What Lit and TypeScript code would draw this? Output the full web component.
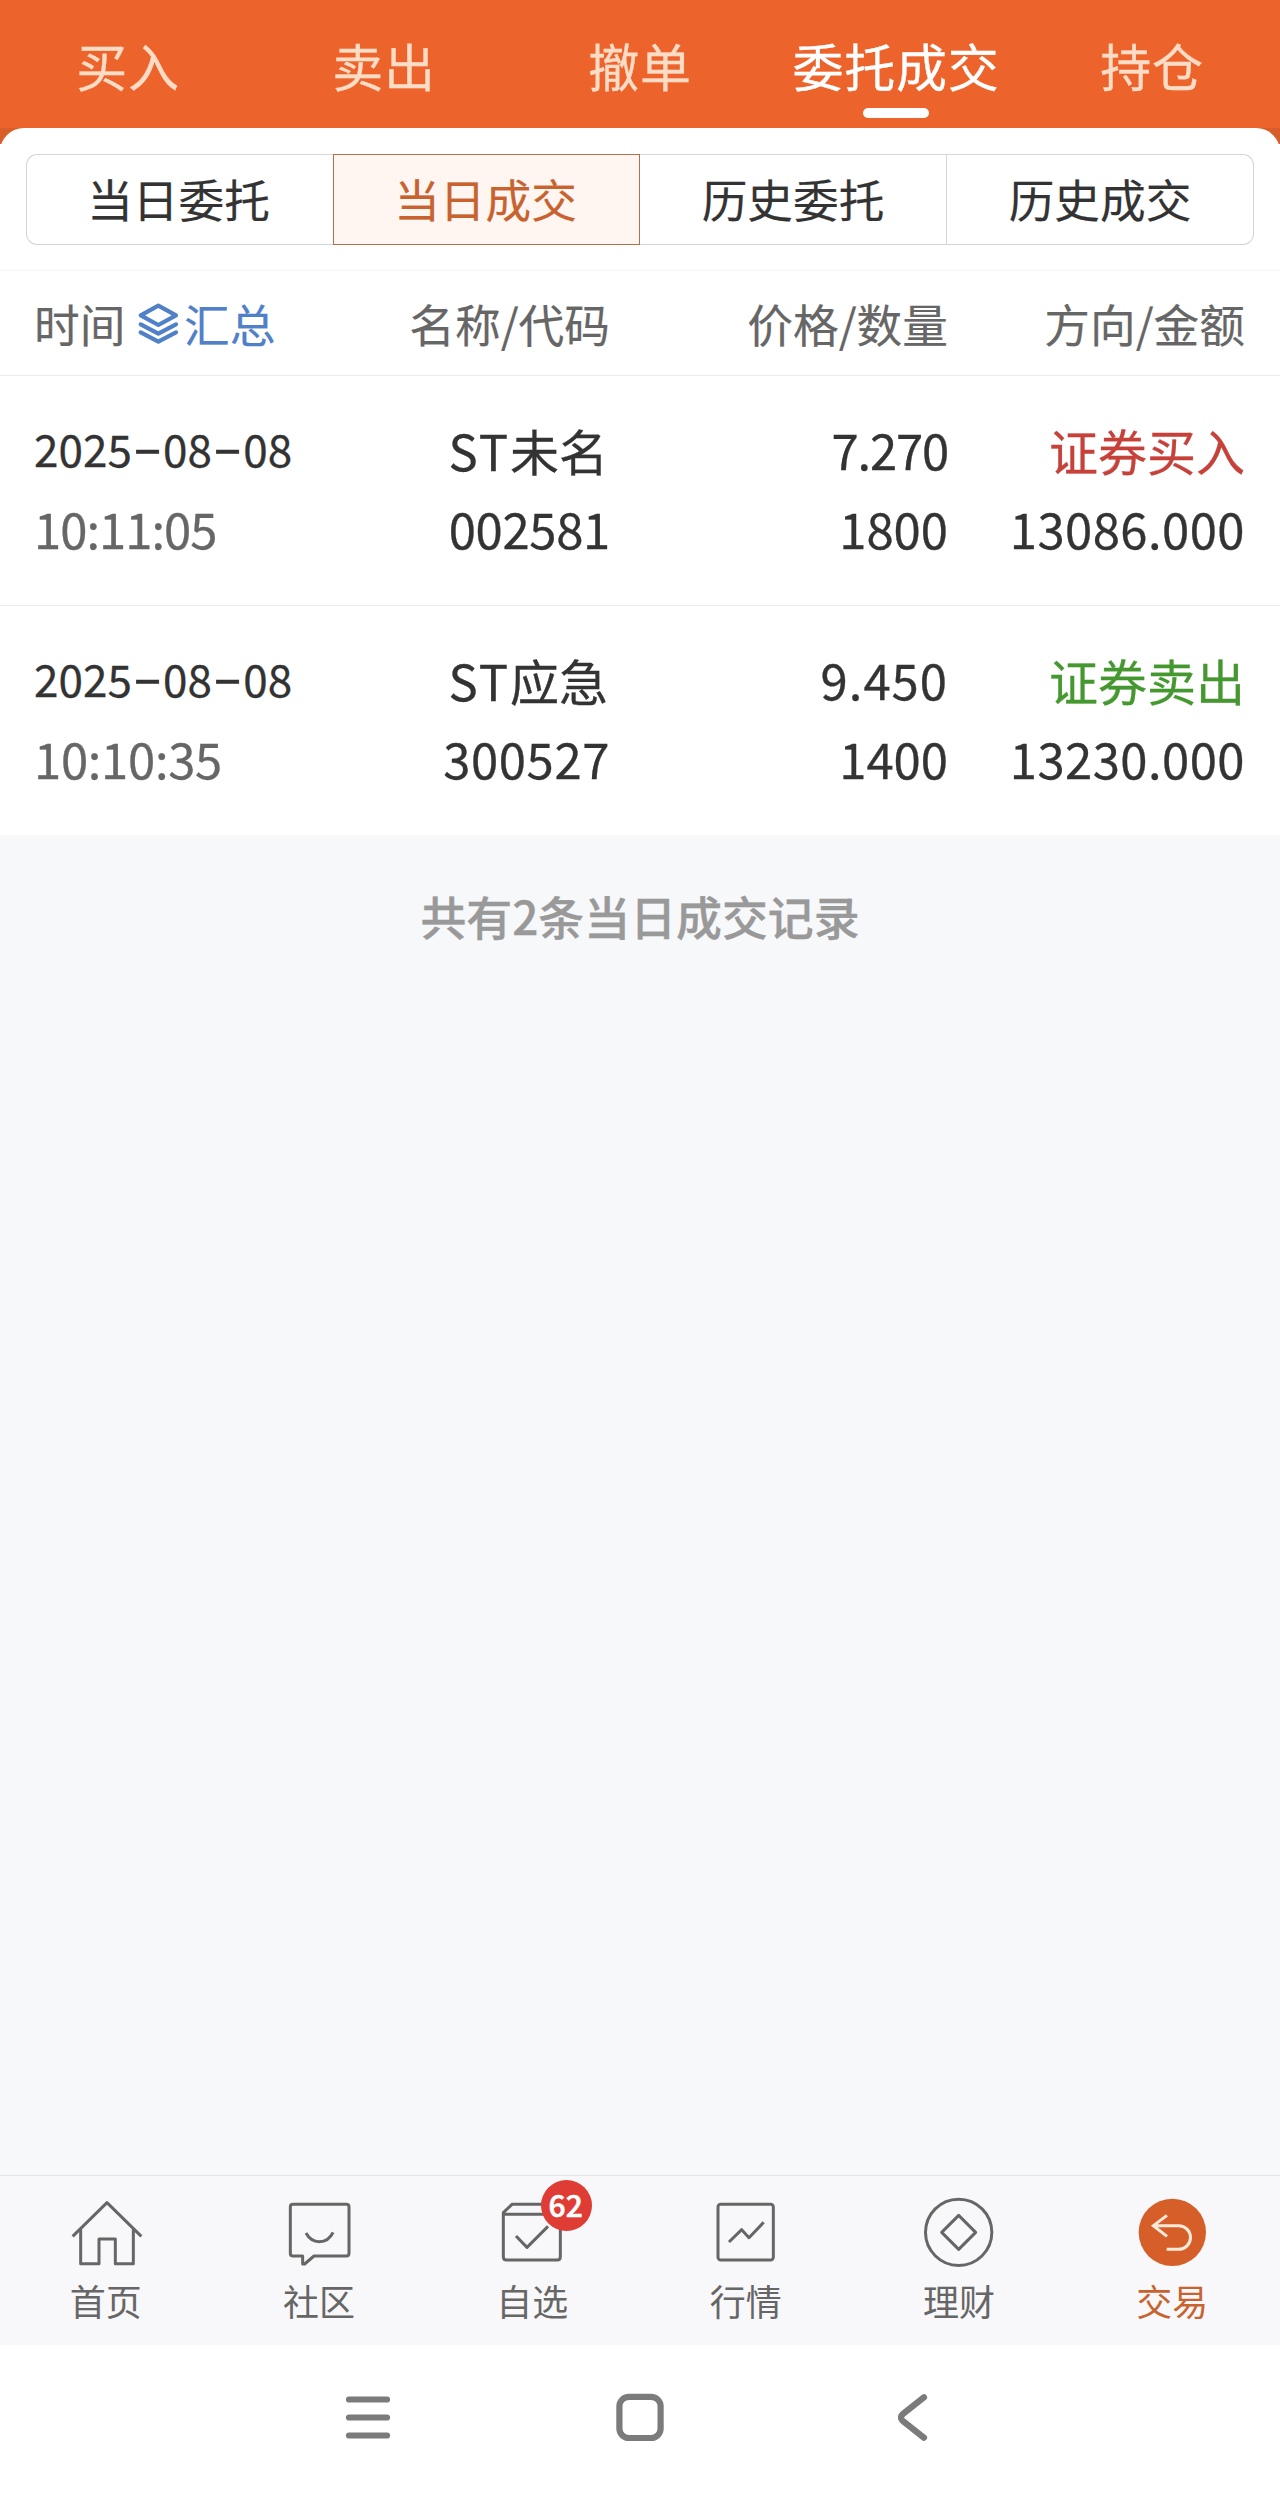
import { LitElement, html, svg, css } from "lit";
import { customElement, property } from "lit/decorators.js";
import { classMap } from "lit/directives/class-map.js";

interface Trade {
  date: string;
  time: string;
  name: string;
  code: string;
  price: string;
  qty: string;
  side: "buy" | "sell";
  label: string;
  amount: string;
}

const TABS = ["买入", "卖出", "撤单", "委托成交", "持仓"];
const SEGMENTS = ["当日委托", "当日成交", "历史委托", "历史成交"];
const TRADES: Trade[] = [
  { date: "2025-08-08", time: "10:11:05", name: "ST未名", code: "002581", price: "7.270", qty: "1800", side: "buy", label: "证券买入", amount: "13086.000" },
  { date: "2025-08-08", time: "10:10:35", name: "ST应急", code: "300527", price: "9.450", qty: "1400", side: "sell", label: "证券卖出", amount: "13230.000" },
];

const NAV = [
  {
    label: "首页", box: "194 90 252 252",
    icon: svg`<path d="M217 229 L320 128 L423 229"/><path d="M241 208 V311 H296 V237 H345 V311 H399 V208"/>`,
  },
  {
    label: "社区", box: "834 90 252 252",
    icon: svg`<path d="M879 133 H1039 Q1047 133 1047 141 V280 Q1047 288 1039 288 H942 L914 312 H908 V288 H879 Q871 288 871 280 V141 Q871 133 879 133 Z"/><path d="M918 219 Q932 245 958 245 Q986 245 999 217"/>`,
  },
  {
    label: "自选", box: "184 90 252 252", badge: "62",
    icon: svg`<path d="M221 163 H392 V290 Q392 300 382 300 H231 Q221 300 221 290 V158 L247 133 H368 L392 163"/><path d="M259 228 L292 262 L355 199"/>`,
  },
  {
    label: "行情", box: "824 90 252 252",
    icon: svg`<rect x="863" y="133" width="166" height="167" rx="8"/><path d="M896 246 L934 209 L956 233 L1000 187"/>`,
  },
  {
    label: "理财", box: "204 90 252 252",
    icon: svg`<circle cx="326" cy="217" r="99.5"/><path d="M326 166 L377 217 L326 268 L275 217 Z"/>`,
  },
  {
    label: "交易", box: "844 90 252 252", active: true,
    icon: svg`<circle class="disc" cx="968" cy="217" r="101"/><path d="M952 166 L911 197 L952 229 M914 197 H987 A35.5 35.5 0 0 1 987 268 H951"/>`,
  },
];

@customElement("trade-row")
class TradeRow extends LitElement {
  @property({ attribute: false }) trade!: Trade;

  static styles = css`
    :host { display: block; height: 230px; box-sizing: border-box; border-bottom: 1px solid #ebebec; color: #333; }
    :host([last]) { border-bottom: 0; height: 229px; }
    .row {
      display: grid;
      grid-template-columns: 300px 275px 338px 297px;
      grid-template-rows: 79px 79px;
      padding: 33px 35px 0 35px;
      line-height: 79px;
      font-size: 49px;
      text-align: right;
      white-space: nowrap;
      -webkit-text-stroke: 0.3px currentColor;
    }
    .date, .time { text-align: left; margin-left: -1px; }
    .date { font-size: 44px; letter-spacing: 0.1px; }
    .time { color: #666; letter-spacing: -1px; }
    :host([last]) .time { letter-spacing: -0.3px; }
    .dash { display: inline-block; width: 31px; text-align: center; transform: translateY(-4px) scale(2, 1.15); }
    .name { padding-right: 2px; }
    .name, .buy, .sell { position: relative; top: 1px; }
    .latin { letter-spacing: 2px; }
    .price { letter-spacing: -1.2px; }
    :host([last]) .price { letter-spacing: 1px; }
    .code { letter-spacing: -0.3px; }
    :host([last]) .code { letter-spacing: 0.6px; }
    .amount { letter-spacing: 0.45px; }
    .buy { color: #c5413a; }
    .sell { color: #45982f; }
  `;

  render() {
    const t = this.trade;
    const parts = t.date.split("-");
    return html`<div class="row">
      <div class="date">${parts.map((p, i) => (i ? html`<span class="dash">-</span>${p}` : p))}</div>
      <div class="name"><span class="latin">${t.name.slice(0, 2)}</span>${t.name.slice(2)}</div>
      <div class="price">${t.price}</div>
      <div class=${t.side}>${t.label}</div>
      <div class="time">${t.time}</div>
      <div class="code">${t.code}</div>
      <div>${t.qty}</div>
      <div class="amount">${t.amount}</div>
    </div>`;
  }
}

@customElement("app-root")
class AppRoot extends LitElement {
  static styles = css`
    :host {
      display: flex;
      flex-direction: column;
      width: 1280px;
      height: 2497px;
      overflow: hidden;
      background: #f7f8fa;
      font-family: "Noto Sans CJK SC", "Noto Sans", sans-serif;
      color: #333;
    }
    .tabs { display: grid; grid-template-columns: repeat(5, 1fr); height: 128px; background: #ec632b; flex: none; }
    .tab {
      display: flex; flex-direction: column; align-items: center;
      padding-top: 25px; box-sizing: border-box;
      font-size: 51px; line-height: 80px; letter-spacing: 0.8px; color: #ffdcc6; white-space: nowrap;
      -webkit-text-stroke: 0.3px currentColor;
    }
    .tab.on { color: #fff; }
    .tab.on::after { content: ""; width: 66px; height: 10px; margin-top: 3px; border-radius: 5px; background: #fff; }
    .under { flex: none; background: linear-gradient(#d75d29 0 16px, #fff 16px); }
    .panel { background: #fff; border-radius: 24px 24px 0 0; padding-top: 26px; }
    .segs { display: grid; grid-template-columns: repeat(4, 307px); margin: 0 26px; height: 91px; }
    .seg {
      display: flex; align-items: center; justify-content: center; box-sizing: border-box;
      border: 1px solid #d5d6d8; border-left-width: 0; font-size: 45.7px; padding-bottom: 3px;
      -webkit-text-stroke: 0.2px currentColor;
    }
    .seg:first-child { border-left-width: 1px; border-right-width: 0; border-radius: 11px 0 0 11px; padding-right: 3px; }
    .seg:last-child { border-radius: 0 11px 11px 0; }
    .seg.on { border: 1px solid #b3704a; background: #fff6f2; color: #c8632f; padding-right: 2px; }
    .head {
      display: grid; grid-template-columns: 300px 275px 338px 297px;
      margin-top: 25px; height: 106px; box-sizing: border-box; padding: 0 35px;
      border-top: 1px solid #f5f5f6; border-bottom: 1px solid #ebebec;
      font-size: 45.7px; line-height: 105px; color: #666; text-align: right; white-space: nowrap;
      -webkit-text-stroke: 0.2px currentColor;
    }
    .first { display: flex; align-items: center; text-align: left; height: 105px; margin-left: -1px; }
    .layers { width: 42.7px; height: 43.3px; margin: 1px 4px 0 12px; fill: none; stroke: #4f80c8; stroke-width: 12.5; stroke-linejoin: round; stroke-linecap: round; }
    .sum { color: #4f80c8; }
    .note { flex: 1; padding-top: 45px; text-align: center; font-size: 45.9px; line-height: 70px; font-weight: 500; color: #999; -webkit-text-stroke: 0.4px currentColor; }
    .nav {
      flex: none; display: grid; grid-template-columns: repeat(6, 1fr); height: 170px; box-sizing: border-box;
      border-top: 1px solid #e2e4e6; background: #f8f8fa;
    }
    .item { position: relative; display: flex; flex-direction: column; align-items: center; padding-top: 14px; font-size: 36px; line-height: 52px; color: #666; }
    .item svg { width: 84px; height: 84px; fill: none; stroke: #666; stroke-width: 9; stroke-linejoin: round; }
    .label { padding-right: 2px; }
    .item.on { color: #c8632f; }
    .item.on svg { stroke: #ffe9d8; stroke-linejoin: miter; }
    .item .disc { fill: #d65f29; stroke: none; }
    .badge {
      position: absolute; left: 114px; top: 4px; width: 51px; height: 51px; border-radius: 50%;
      background: #de3c34; color: #fff; font-size: 30px; line-height: 48px; text-align: center; font-weight: 500;
      -webkit-text-stroke: 0.6px currentColor; text-indent: -1px;
    }
    .system { flex: none; height: 152px; background: #fff; display: flex; justify-content: center; padding-right: 1px; }
    .system svg { width: 272px; height: 145px; fill: none; stroke: #7b7b7b; stroke-width: 6.2; stroke-linecap: round; stroke-linejoin: round; }
  `;

  render() {
    return html`
      <div class="tabs">
        ${TABS.map((t) => html`<div class=${classMap({ tab: true, on: t === "委托成交" })}>${t}</div>`)}
      </div>
      <div class="under"><div class="panel">
        <div class="segs">
          ${SEGMENTS.map((s) => html`<div class=${classMap({ seg: true, on: s === "当日成交" })}>${s}</div>`)}
        </div>
        <div class="head">
          <div class="first">
            <span>时间</span>
            <svg class="layers" viewBox="24 36 128 130">
              <path d="M88 47 L141 76 L88 105 L35 76 Z M35 103 L88 131 L141 103 M35 127 L88 155 L141 127" />
            </svg>
            <span class="sum">汇总</span>
          </div>
          <div>名称/代码</div>
          <div>价格/数量</div>
          <div>方向/金额</div>
        </div>
        ${TRADES.map((t, i) => html`<trade-row .trade=${t} ?last=${i === TRADES.length - 1}></trade-row>`)}
      </div></div>
      <div class="note">共有2条当日成交记录</div>
      <div class="nav">
        ${NAV.map((n) => html`<div class=${classMap({ item: true, on: !!n.active })}>
          <svg viewBox=${n.box}>${n.icon}</svg>
          <span class="label">${n.label}</span>
          ${n.badge ? html`<span class="badge">${n.badge}</span>` : null}
        </div>`)}
      </div>
      <div class="system">
        <svg viewBox="0 0 272 145"><path d="M117 54.5 H155 M117 72.5 H155 M117 90.5 H155" /></svg>
        <svg viewBox="0 0 272 145"><rect x="115.4" y="51.8" width="41.2" height="41.2" rx="9.5" /></svg>
        <svg viewBox="0 0 272 145"><path d="M148 52.3 L127.500 68.500 Q122.500 72.500 127.500 76.500 L148 92.700" /></svg>
      </div>
    `;
  }
}
